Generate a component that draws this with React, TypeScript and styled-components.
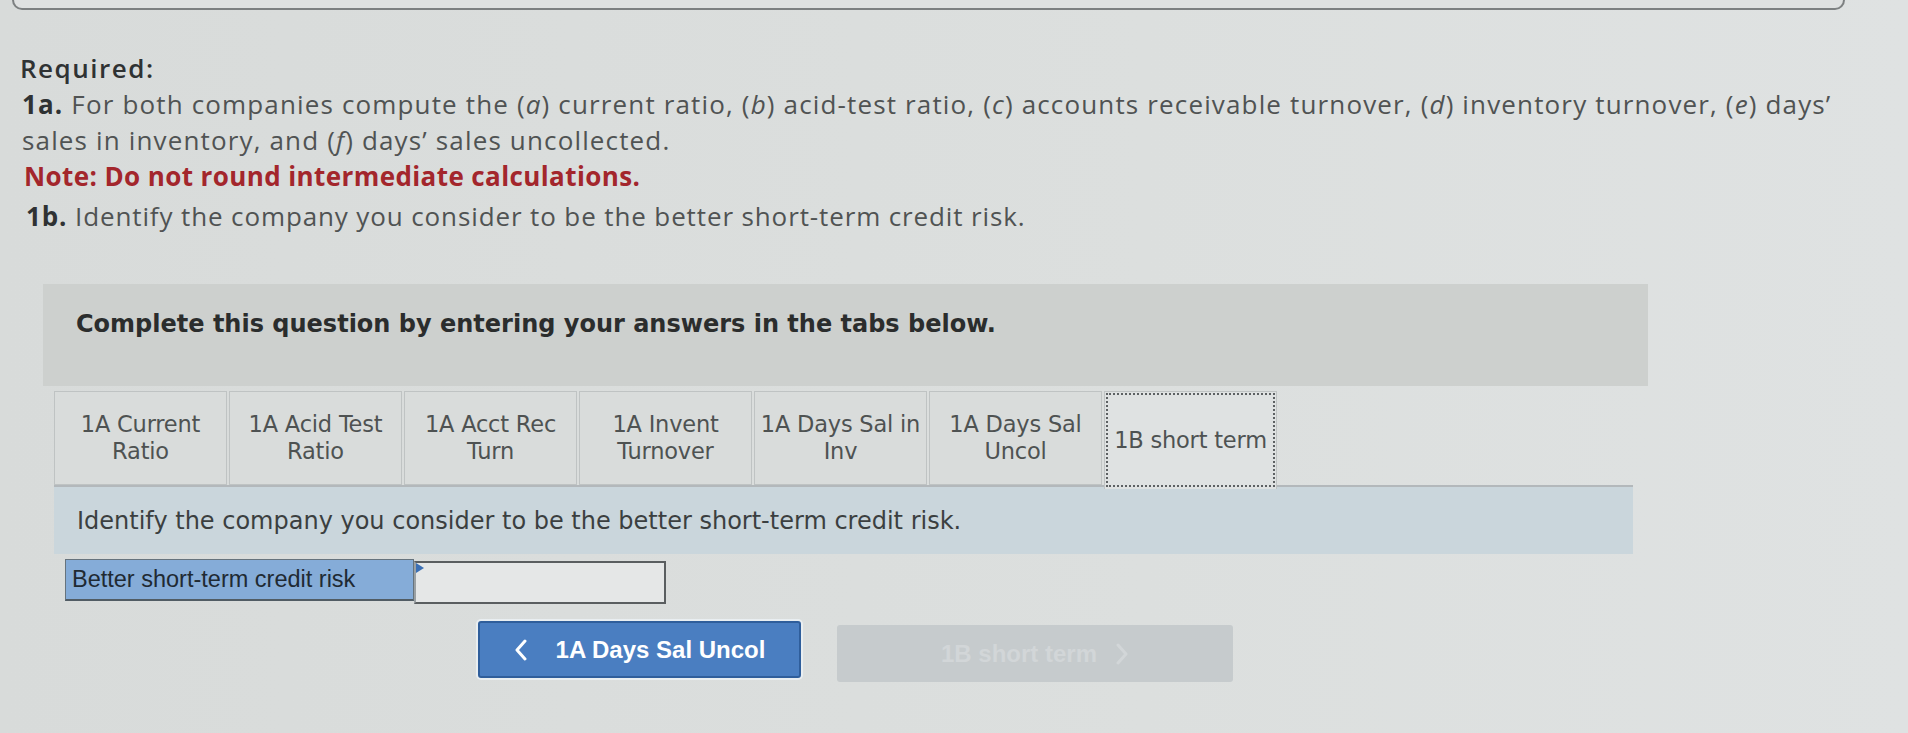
import React from "react";
import styled, { createGlobalStyle } from "styled-components";

const Global = createGlobalStyle`
  html, body { margin: 0; padding: 0; }
  body {
    background: #dadddc;
    width: 1908px;
    height: 733px;
    overflow: hidden;
  }
`;

const Page = styled.div`
  width: 1908px;
  height: 733px;
  background: linear-gradient(90deg, #d8dbda 0%, #dcdfde 60%, #dfe2e2 100%);
  display: flex;
  flex-direction: column;
`;

const TopBar = styled.div`
  height: 8px;
  margin: 0 63px 0 12px;
  border: 2px solid #7d8081;
  border-top: none;
  border-radius: 0 0 12px 12px;
  background: #dfe1e1;
`;

const Instructions = styled.div`
  margin-top: 40px;
  padding-left: 20px;
  font-family: "Open Sans", "Noto Sans", sans-serif;
  font-size: 26px;
  line-height: 36px;
  letter-spacing: 1.15px;
  color: #505353;
`;

const Heading = styled.div`
  font-weight: 600;
  color: #2f3233;
  letter-spacing: 1.5px;
`;

const Para = styled.div<{ $indent?: number; $gap?: number; $spacing?: number }>`
  white-space: nowrap;
  padding-left: ${(p) => p.$indent ?? 0}px;
  margin-top: ${(p) => p.$gap ?? 0}px;
  letter-spacing: ${(p) => p.$spacing ?? 1.15}px;
`;

const Num = styled.span`
  font-weight: 700;
  color: #2f3233;
`;

const Em = styled.i`
  font-style: italic;
`;

const Note = styled.div`
  padding-left: 4px;
  font-weight: 700;
  color: #a3262c;
  letter-spacing: 0.4px;
`;

const QuestionPanel = styled.div`
  margin: 50px 0 0 43px;
  width: 1605px;
  height: 102px;
  box-sizing: border-box;
  padding: 26px 0 0 33px;
  background: #cdd0ce;
  font-family: "DejaVu Sans", Verdana, sans-serif;
  font-weight: 700;
  font-size: 24px;
  color: #2b2d2d;
`;

const TabsSection = styled.div`
  margin: 5px 0 0 54px;
  width: 1579px;
  display: flex;
  flex-direction: column;
`;

const TabList = styled.div`
  display: flex;
  height: 96px;
  border-bottom: 2px solid #b3b8bb;
  box-sizing: border-box;
`;

const Tab = styled.div<{ $active?: boolean }>`
  width: 173px;
  margin-right: 2px;
  box-sizing: border-box;
  height: ${(p) => (p.$active ? "98px" : "94px")};
  border: 1px solid #bfc3c3;
  border-bottom: ${(p) => (p.$active ? "none" : "1px solid #bfc3c3")};
  background: ${(p) => (p.$active ? "#dfe2e2" : "#d9dcdb")};
  display: flex;
  align-items: center;
  justify-content: center;
  text-align: center;
  font-family: "DejaVu Sans", Verdana, sans-serif;
  font-size: 22.5px;
  line-height: 27px;
  letter-spacing: -0.2px;
  color: #4e5252;
  outline: ${(p) => (p.$active ? "2px dotted #5d6163" : "none")};
  outline-offset: -4px;
  position: relative;
  z-index: ${(p) => (p.$active ? 1 : 0)};
`;

const QuestionRow = styled.div`
  height: 67px;
  box-sizing: border-box;
  padding: 20px 0 0 23px;
  background: #cad6dc;
  font-family: "DejaVu Sans", Verdana, sans-serif;
  font-size: 24px;
  color: #3b3f40;
`;

const AnswerRow = styled.div`
  margin: 5px 0 0 11px;
  display: flex;
  align-items: flex-start;
`;

const Label = styled.div`
  width: 349px;
  height: 42px;
  box-sizing: border-box;
  padding: 6px 0 0 6px;
  background: #85acd8;
  border: 1px solid #66737d;
  border-bottom: 2px solid #515c64;
  font-family: "Liberation Sans", Arial, sans-serif;
  font-size: 23.5px;
  color: #1f2a33;
`;

const InputBox = styled.div`
  position: relative;
  width: 252px;
  height: 43px;
  margin-top: 2px;
  box-sizing: border-box;
  background: #e5e7e7;
  border: 2px solid #5a5e60;
  border-left-color: #9aa0a3;
`;

const Flag = styled.span`
  position: absolute;
  left: 0;
  top: 0;
  width: 0;
  height: 0;
  border-top: 5px solid transparent;
  border-bottom: 5px solid transparent;
  border-left: 8px solid #3b6fb4;
`;

const NavRow = styled.div`
  margin-top: 17px;
  padding-left: 24px;
  display: flex;
  justify-content: center;
  align-items: flex-start;
  gap: 36px;
`;

const NavButton = styled.div<{ $disabled?: boolean }>`
  height: 57px;
  box-sizing: border-box;
  display: flex;
  align-items: center;
  justify-content: center;
  gap: ${(p) => (p.$disabled ? "18px" : "28px")};
  width: ${(p) => (p.$disabled ? "396px" : "323px")};
  margin-top: ${(p) => (p.$disabled ? "4px" : "0")};
  border-radius: 3px;
  background: ${(p) => (p.$disabled ? "#c6cbcd" : "#4a7ec1")};
  border: ${(p) => (p.$disabled ? "none" : "2px solid #2f5e9b")};
  box-shadow: ${(p) => (p.$disabled ? "none" : "0 0 0 2px rgba(240,245,250,0.7)")};
  color: ${(p) => (p.$disabled ? "#d2d6d8" : "#ffffff")};
  font-family: "Liberation Sans", Arial, sans-serif;
  font-weight: 700;
  font-size: 24px;
`;

const Chevron = ({ dir, color }: { dir: "left" | "right"; color: string }) => (
  <svg width="14" height="22" viewBox="0 0 14 22">
    <polyline
      points={dir === "left" ? "11,2 3,11 11,20" : "3,2 11,11 3,20"}
      fill="none"
      stroke={color}
      strokeWidth="3"
      strokeLinecap="round"
      strokeLinejoin="round"
    />
  </svg>
);

const tabs = [
  ["1A Current", "Ratio"],
  ["1A Acid Test", "Ratio"],
  ["1A Acct Rec", "Turn"],
  ["1A Invent", "Turnover"],
  ["1A Days Sal in", "Inv"],
  ["1A Days Sal", "Uncol"],
  ["1B short term"],
];

export default function App() {
  return (
    <>
      <Global />
      <Page>
        <TopBar />
        <Instructions>
          <Heading>Required:</Heading>
          <Para $indent={2}>
            <Num>1a.</Num> For both companies compute the (<Em>a</Em>) current ratio, (<Em>b</Em>) acid-test ratio, (<Em>c</Em>) accounts receivable turnover, (<Em>d</Em>) inventory turnover, (<Em>e</Em>) days’
            <br />
            sales in inventory, and (<Em>f</Em>) days’ sales uncollected.
          </Para>
          <Note>Note: Do not round intermediate calculations.</Note>
          <Para $indent={6} $gap={4} $spacing={0.88}>
            <Num>1b.</Num> Identify the company you consider to be the better short-term credit risk.
          </Para>
        </Instructions>
        <QuestionPanel>Complete this question by entering your answers in the tabs below.</QuestionPanel>
        <TabsSection>
          <TabList>
            {tabs.map((t, i) => (
              <Tab key={i} $active={i === tabs.length - 1}>
                <div>
                  {t.map((line, j) => (
                    <div key={j}>{line}</div>
                  ))}
                </div>
              </Tab>
            ))}
          </TabList>
          <QuestionRow>Identify the company you consider to be the better short-term credit risk.</QuestionRow>
          <AnswerRow>
            <Label>Better short-term credit risk</Label>
            <InputBox>
              <Flag />
            </InputBox>
          </AnswerRow>
          <NavRow>
            <NavButton>
              <Chevron dir="left" color="#ffffff" />
              <span>1A Days Sal Uncol</span>
            </NavButton>
            <NavButton $disabled>
              <span>1B short term</span>
              <Chevron dir="right" color="#d2d6d8" />
            </NavButton>
          </NavRow>
        </TabsSection>
      </Page>
    </>
  );
}
